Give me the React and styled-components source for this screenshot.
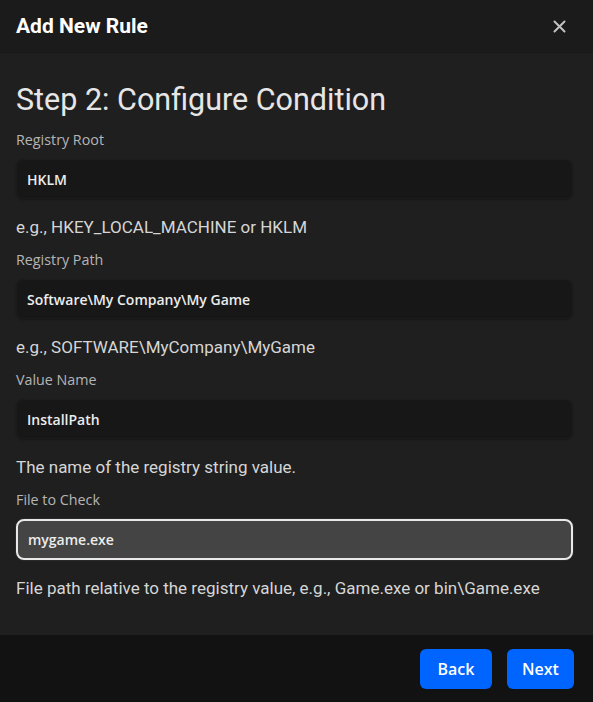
import React from 'react'
import styled, { createGlobalStyle } from 'styled-components';

const GlobalStyle = createGlobalStyle`
  html, body {
    margin: 0;
    padding: 0;
    background: #1e1e1e;
  }
  * { box-sizing: border-box; }
`;

const Modal = styled.div`
  width: 593px;
  height: 702px;
  display: flex;
  flex-direction: column;
  background: #1f1f1f;
  font-family: Roboto, "Liberation Sans", sans-serif;
`;

const Header = styled.header`
  height: 53px;
  flex-shrink: 0;
  display: flex;
  align-items: center;
  justify-content: space-between;
  padding: 0 27px 0 16px;
  background: #1b1b1b;
  border-bottom: 1px solid #191919;
`;

const ModalTitle = styled.h2`
  margin: 0;
  font-size: 21px;
  font-weight: 700;
  color: #fff;
  letter-spacing: 0;
`;

const CloseButton = styled.button`
  border: 0;
  background: none;
  padding: 0;
  color: #c2c2c2;
  display: flex;
  cursor: pointer;
`;

const Body = styled.main`
  flex: 1;
  padding: 29px 20px 0 16px;
`;

const StepTitle = styled.h1`
  margin: 0 0 11px;
  font-size: 30.5px;
  font-weight: 400;
  line-height: 36px;
  color: #e6e6e6;
`;

const Field = styled.div`
  display: flex;
  flex-direction: column;
`;

const Label = styled.label`
  font-family: "Open Sans", Lato, sans-serif;
  font-size: 14.3px;
  line-height: 22px;
  color: #b5b5b5;
  margin-bottom: 8px;
`;

const Input = styled.div`
  height: ${p => (p.$focused ? '41px' : '40px')};
  display: flex;
  align-items: center;
  padding: 0 10px;
  border-radius: 8px;
  background: ${p => (p.$focused ? '#444444' : '#171717')};
  border: ${p => (p.$focused ? '2px solid #e8e8e8' : '1px solid #1c1c1c')};
  box-shadow: ${p => (p.$focused ? '0 0 0 1px #2a2a2a' : '0 1px 2px rgba(0,0,0,0.35)')};
  font-family: "Open Sans", Lato, sans-serif;
  font-size: 14px;
  font-weight: 600;
  color: #ececec;
`;

const Hint = styled.p`
  margin: 16px 0 10px;
  font-size: 17px;
  line-height: 24px;
  color: #d6d6d6;
`;

const Footer = styled.footer`
  height: 67px;
  flex-shrink: 0;
  display: flex;
  align-items: center;
  justify-content: flex-end;
  gap: 15px;
  padding: 0 19px 0 0;
  background: #121212;
`;

const Button = styled.button`
  height: 40px;
  width: ${p => p.$w}px;
  padding: 0;
  border: 0;
  border-radius: 6px;
  background: #0064ff;
  color: #fff;
  font-family: "Open Sans", Lato, sans-serif;
  font-size: 16px;
  font-weight: 600;
  cursor: pointer;
`;

const fields = [
  { label: 'Registry Root', value: 'HKLM', hint: 'e.g., HKEY_LOCAL_MACHINE or HKLM' },
  { label: 'Registry Path', value: 'Software\\My Company\\My Game', hint: 'e.g., SOFTWARE\\MyCompany\\MyGame' },
  { label: 'Value Name', value: 'InstallPath', hint: 'The name of the registry string value.' },
  { label: 'File to Check', value: 'mygame.exe', hint: 'File path relative to the registry value, e.g., Game.exe or bin\\Game.exe', focused: true },
];

function App() {
  return (
    <>
      <GlobalStyle />
      <Modal>
        <Header>
          <ModalTitle>Add New Rule</ModalTitle>
          <CloseButton aria-label="Close">
            <svg width="13" height="13" viewBox="0 0 13 13">
              <path d="M1.5 1.5 L11.5 11.5 M11.5 1.5 L1.5 11.5" stroke="currentColor" strokeWidth="2" strokeLinecap="round" />
            </svg>
          </CloseButton>
        </Header>
        <Body>
          <StepTitle>Step 2: Configure Condition</StepTitle>
          {fields.map(f => (
            <Field key={f.label}>
              <Label>{f.label}</Label>
              <Input $focused={f.focused}>{f.value}</Input>
              <Hint>{f.hint}</Hint>
            </Field>
          ))}
        </Body>
        <Footer>
          <Button $w={72}>Back</Button>
          <Button $w={67}>Next</Button>
        </Footer>
      </Modal>
    </>
  )
}

export default App
